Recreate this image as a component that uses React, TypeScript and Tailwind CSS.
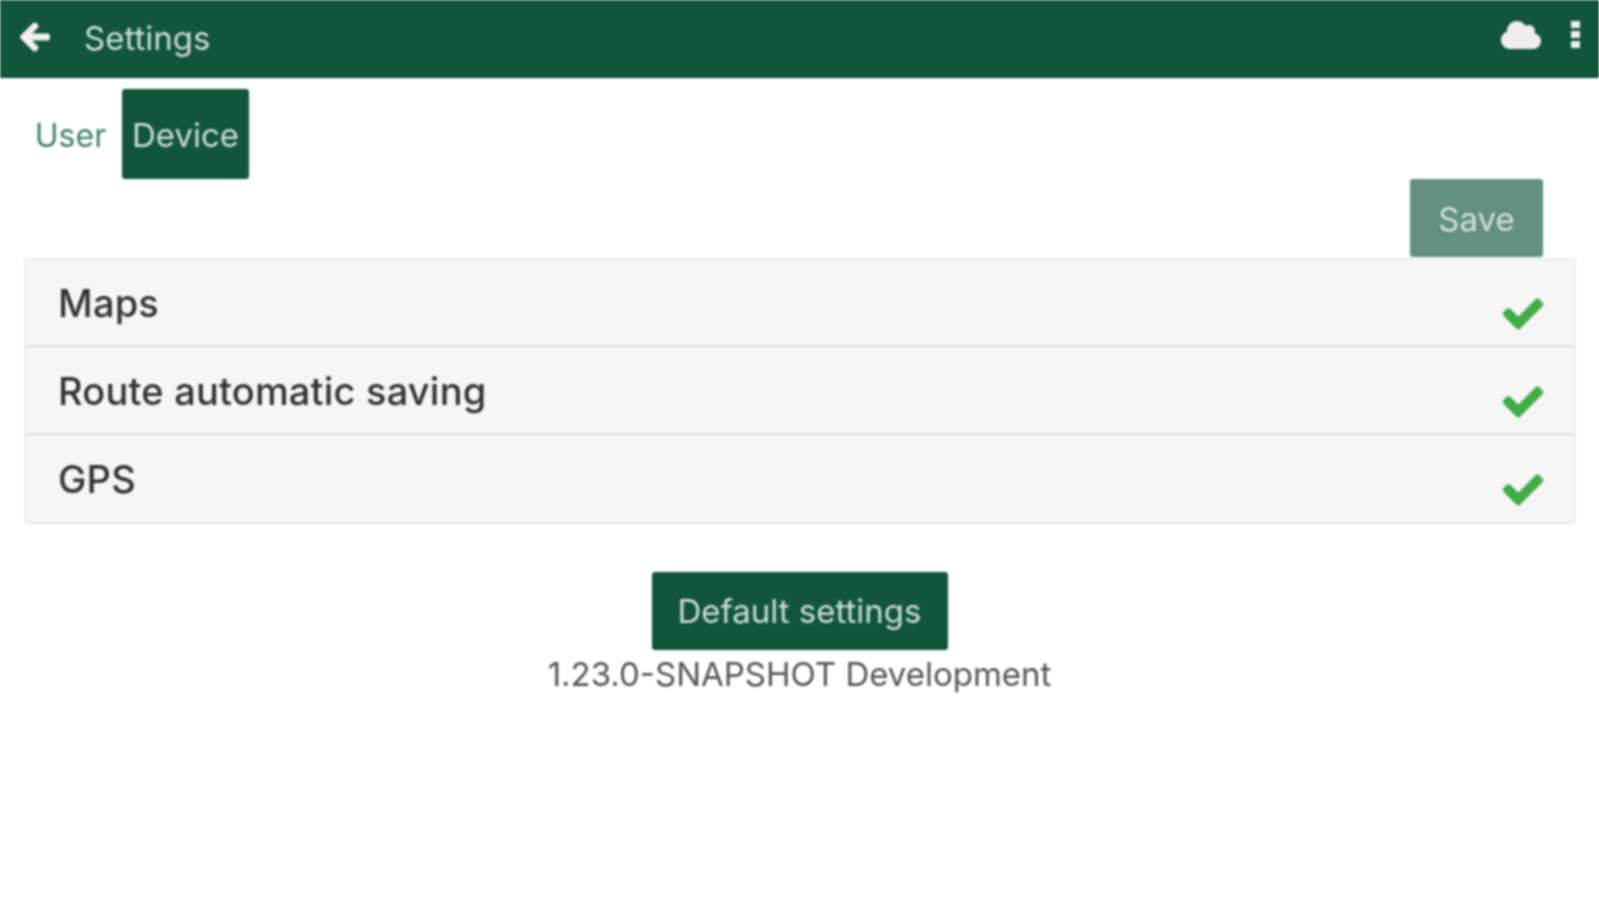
import { FaArrowLeft, FaCheck, FaCloud } from "react-icons/fa";

const sections = ["Maps", "Route automatic saving", "GPS"];

function MoreIcon() {
  return (
    <div className="flex w-[9px] flex-col gap-[3px]">
      <span className="h-[7px] bg-[#f0eeea]" />
      <span className="h-[7px] bg-[#f0eeea]" />
      <span className="h-[7px] bg-[#f0eeea]" />
    </div>
  );
}

function SectionRow({ label }: { label: string }) {
  return (
    <div className="flex h-[88px] justify-between border-b-[3px] border-[#e6e6e6] bg-[#f6f6f6] pl-[32px] pr-[30px] last:rounded-b last:border-b-2">
      <span className="mt-[22px] text-[38px] leading-[42px] font-medium tracking-[0.2px] text-[#333]">{label}</span>
      <FaCheck className="mt-[35px] h-[38px] w-[42px] stroke-[30] text-[#3fae49]" />
    </div>
  );
}

export default function App() {
  return (
    <div className="h-[900px] overflow-hidden bg-white font-['Inter',sans-serif] blur-[0.8px]">
      <header className="flex h-[78px] items-center border-b-[2px] border-[#0f4a35] bg-[#11563c] pb-[2px] pl-[19px] pr-[19px]">
        <FaArrowLeft className="h-[32px] w-[32px] stroke-[30] text-[#f4f1ec]" />
        <h1 className="ml-[33px] mt-[2px] text-[33px] leading-none text-[#cfdcd5]">Settings</h1>
        <FaCloud className="mb-[4px] ml-auto h-[38px] w-[40px] text-[#f0eeea]" />
        <div className="mb-[5px] ml-[30px]">
          <MoreIcon />
        </div>
      </header>

      <div className="flex items-stretch pl-[24px] pt-[11px]">
        <button className="flex h-[90px] w-[98px] items-center justify-center pr-[5px] pt-[3px] text-[32px] text-[#3f8069]">
          User
        </button>
        <button className="flex h-[90px] w-[127px] items-center justify-center rounded-[3px] bg-[#11563c] pt-[3px] text-[33px] text-[#cfdcd5]">
          Device
        </button>
      </div>

      <div className="flex justify-end pr-[56px]">
        <button className="h-[78px] w-[133px] rounded-[3px] bg-[#639080] pt-[3px] text-[33px] text-[#d3e0da]">Save</button>
      </div>

      <div className="ml-[24px] mr-[23px] mt-[1px] rounded border-x-2 border-t-2 border-[#ececec]">
        {sections.map((s) => (
          <SectionRow key={s} label={s} />
        ))}
      </div>

      <div className="mt-[48px] flex flex-col items-center">
        <button className="h-[78px] w-[296px] rounded-[3px] bg-[#11563c] pt-[1px] text-[33px] text-[#cfdcd5]">
          Default settings
        </button>
        <p className="mt-[4px] text-[33px] leading-[40px] text-[#555]">1.23.0-SNAPSHOT Development</p>
      </div>
    </div>
  );
}
